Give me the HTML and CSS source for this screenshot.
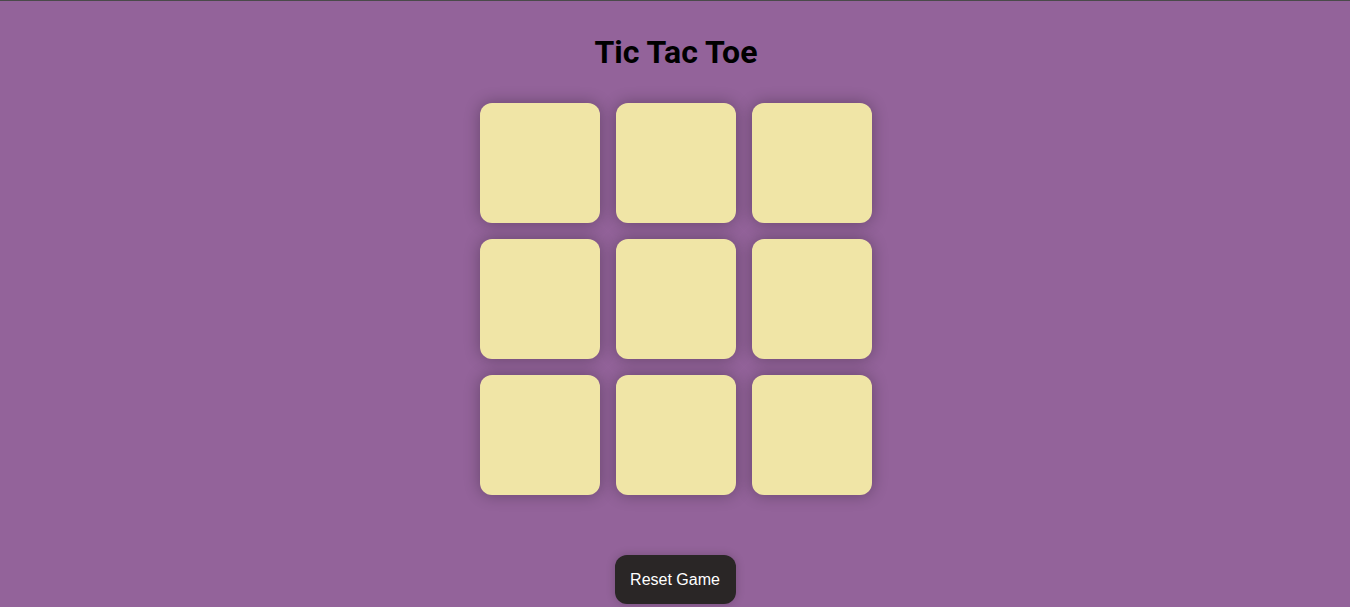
FILE: index.html
```html
<!DOCTYPE html>
<html lang="en">
<head>
<meta charset="utf-8">
<title>Tic Tac Toe</title>
<link rel="stylesheet" href="styles.css">
</head>
<body>
<main class="game">
  <h1 class="title">Tic Tac Toe</h1>
  <div class="board">
    <button class="cell"></button>
    <button class="cell"></button>
    <button class="cell"></button>
    <button class="cell"></button>
    <button class="cell"></button>
    <button class="cell"></button>
    <button class="cell"></button>
    <button class="cell"></button>
    <button class="cell"></button>
  </div>
  <button class="reset">Reset Game</button>
</main>
</body>
</html>
```

FILE: styles.css
```css
html, body {
  margin: 0;
  padding: 0;
  height: 100%;
}
body {
  background: #93639a;
  border-top: 1px solid #4a4a4a;
  box-sizing: border-box;
  overflow: hidden;
}
.game {
  display: flex;
  flex-direction: column;
  align-items: center;
}
.title {
  font-family: Roboto, "Liberation Sans", sans-serif;
  font-weight: 700;
  font-size: 32px;
  line-height: 37px;
  color: #000;
  margin: 33px 0 32px 2px;
}
.board {
  display: grid;
  grid-template-columns: repeat(3, 120px);
  grid-template-rows: repeat(3, 120px);
  gap: 16px;
  margin-left: 2px;
}
.cell {
  border: none;
  padding: 0;
  background: #f0e5a6;
  border-radius: 12px;
  box-shadow: 0 0 16px rgba(0, 0, 0, 0.3);
  cursor: pointer;
}
.reset {
  margin-top: 60px;
  width: 121px;
  height: 49px;
  border: none;
  border-radius: 12px;
  background: #2a2626;
  color: #fff;
  font-family: "Liberation Sans", Arial, sans-serif;
  font-size: 16px;
  box-shadow: 0 0 10px rgba(0, 0, 0, 0.2);
  cursor: pointer;
}
```
